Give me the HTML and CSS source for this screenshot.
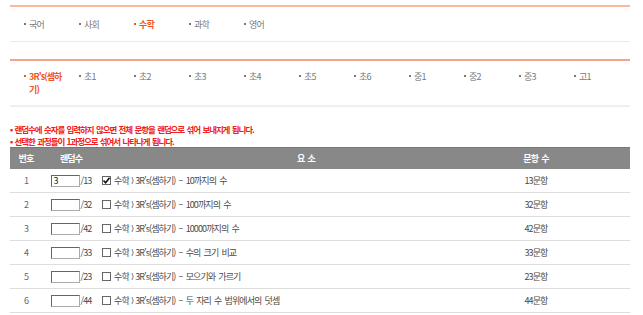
FILE: index.html
```html
<!DOCTYPE html>
<html lang="ko">
<head>
<meta charset="utf-8">
<link rel="stylesheet" href="styles.css">
</head>
<body>
<div class="wrap">
  <div class="tabs subject">
    <ul>
      <li>국어</li>
      <li>사회</li>
      <li class="on">수학</li>
      <li>과학</li>
      <li>영어</li>
    </ul>
  </div>
  <div class="tabs level">
    <ul>
      <li class="on">3R's(셈하기)</li>
      <li>초1</li>
      <li>초2</li>
      <li>초3</li>
      <li>초4</li>
      <li>초5</li>
      <li>초6</li>
      <li>중1</li>
      <li>중2</li>
      <li>중3</li>
      <li>고1</li>
    </ul>
  </div>
  <div class="notes">
    <p>• 랜덤수에 숫자를 입력하지 않으면 전체 문항을 랜덤으로 섞어 보내지게 됩니다.</p>
    <p>• 선택한 과정들이 1과정으로 섞여서 나타나게 됩니다.</p>
  </div>
  <div class="grid">
    <div class="row head">
      <div class="c1">번호</div>
      <div class="c2">랜덤수</div>
      <div class="c3">요 소</div>
      <div class="c4">문항 수</div>
    </div>
    <div class="row">
      <div class="c1">1</div>
      <div class="c2"><span class="inp">3</span>/13</div>
      <div class="c3 el"><span class="chk on"><svg viewBox="0 0 9 9" width="9" height="9"><path d="M1.5 4.5 L3.6 6.8 L7.6 1.8" fill="none" stroke="#111" stroke-width="1.6"/></svg></span>수학 <span class="gt">⟩</span> 3R's(셈하기) – 10까지의 수</div>
      <div class="c4">13문항</div>
    </div>
    <div class="row">
      <div class="c1">2</div>
      <div class="c2"><span class="inp"></span>/32</div>
      <div class="c3 el"><span class="chk"></span>수학 <span class="gt">⟩</span> 3R's(셈하기) – 100까지의 수</div>
      <div class="c4">32문항</div>
    </div>
    <div class="row">
      <div class="c1">3</div>
      <div class="c2"><span class="inp"></span>/42</div>
      <div class="c3 el"><span class="chk"></span>수학 <span class="gt">⟩</span> 3R's(셈하기) – 10000까지의 수</div>
      <div class="c4">42문항</div>
    </div>
    <div class="row">
      <div class="c1">4</div>
      <div class="c2"><span class="inp"></span>/33</div>
      <div class="c3 el"><span class="chk"></span>수학 <span class="gt">⟩</span> 3R's(셈하기) – 수의 크기 비교</div>
      <div class="c4">33문항</div>
    </div>
    <div class="row">
      <div class="c1">5</div>
      <div class="c2"><span class="inp"></span>/23</div>
      <div class="c3 el"><span class="chk"></span>수학 <span class="gt">⟩</span> 3R's(셈하기) – 모으기와 가르기</div>
      <div class="c4">23문항</div>
    </div>
    <div class="row">
      <div class="c1">6</div>
      <div class="c2"><span class="inp"></span>/44</div>
      <div class="c3 el"><span class="chk"></span>수학 <span class="gt">⟩</span> 3R's(셈하기) – 두 자리 수 범위에서의 덧셈</div>
      <div class="c4">44문항</div>
    </div>
  </div>
</div>
</body>
</html>
```

FILE: styles.css
```css
* { box-sizing: border-box; margin: 0; padding: 0; }
html, body { background: #fff; }
body {
  font-family: "Noto Sans CJK KR", "Noto Sans", sans-serif;
  font-size: 9px;
  color: #4a4a4a;
  letter-spacing: -0.9px;
  word-spacing: 1.5px;
}
.wrap {
  width: 620px;
  margin-left: 10px;
  padding-top: 5px;
}
.tabs ul {
  list-style: none;
  display: flex;
  padding-left: 14px;
}
.tabs li {
  position: relative;
  width: 55px;
  padding-left: 5px;
  padding-right: 9px;
  color: #777;
  line-height: 13px;
}
.tabs li::before {
  content: "";
  position: absolute;
  left: 0;
  top: 5px;
  width: 2px;
  height: 2px;
  background: #777;
}
.tabs li.on { color: #ee5522; font-weight: bold; }
.tabs li.on::before { background: #ee5522; }
.subject {
  border-top: 2px solid #ffb6a0;
  border-bottom: 1px solid #eaeaea;
}
.subject ul { padding-top: 11px; height: 34px; }
.level {
  margin-top: 17px;
  border-top: 2px solid #f5a48c;
  border-bottom: 2px solid #f0f0f0;
}
.level ul { padding-top: 9px; height: 44px; }
.notes {
  padding-top: 16px;
  color: #f02020;
  font-weight: bold;
  line-height: 12px;
  font-size: 8.5px;
  letter-spacing: -1.1px;
  word-spacing: 1.2px;
}
.row {
  display: grid;
  grid-template-columns: 32px 58px 412px 48px 1fr;
  height: 24px;
  align-items: center;
  border-bottom: 1px solid #dedede;
}
.row.head {
  height: 22px;
  background: #888;
  border-top: 1px solid #777;
  border-bottom: none;
  color: #fff;
  font-weight: bold;
}
.row .c1 { color: #666; }
.row.head .c1 { color: #fff; }
.c1, .c2, .c3, .c4 { text-align: center; white-space: nowrap; }
.c2 { display: flex; align-items: center; justify-content: center; }
.el { text-align: left; padding-left: 2px; display: flex; align-items: center; white-space: pre; }
.gt { font-family: "DejaVu Sans", sans-serif; font-size: 8px; margin: 0 -1px; }
.inp {
  display: inline-block;
  width: 29px;
  height: 12px;
  border: 1px solid #aaa;
  border-top-color: #666;
  border-left-color: #666;
  line-height: 10px;
  padding-left: 2px;
  text-align: left;
  color: #222;
  margin-right: 1px;
}
.chk {
  display: inline-block;
  width: 9px;
  height: 9px;
  border: 1px solid #666;
  margin-right: 3px;
  position: relative;
}
.chk svg { position: absolute; left: -1px; top: -1px; }
```
